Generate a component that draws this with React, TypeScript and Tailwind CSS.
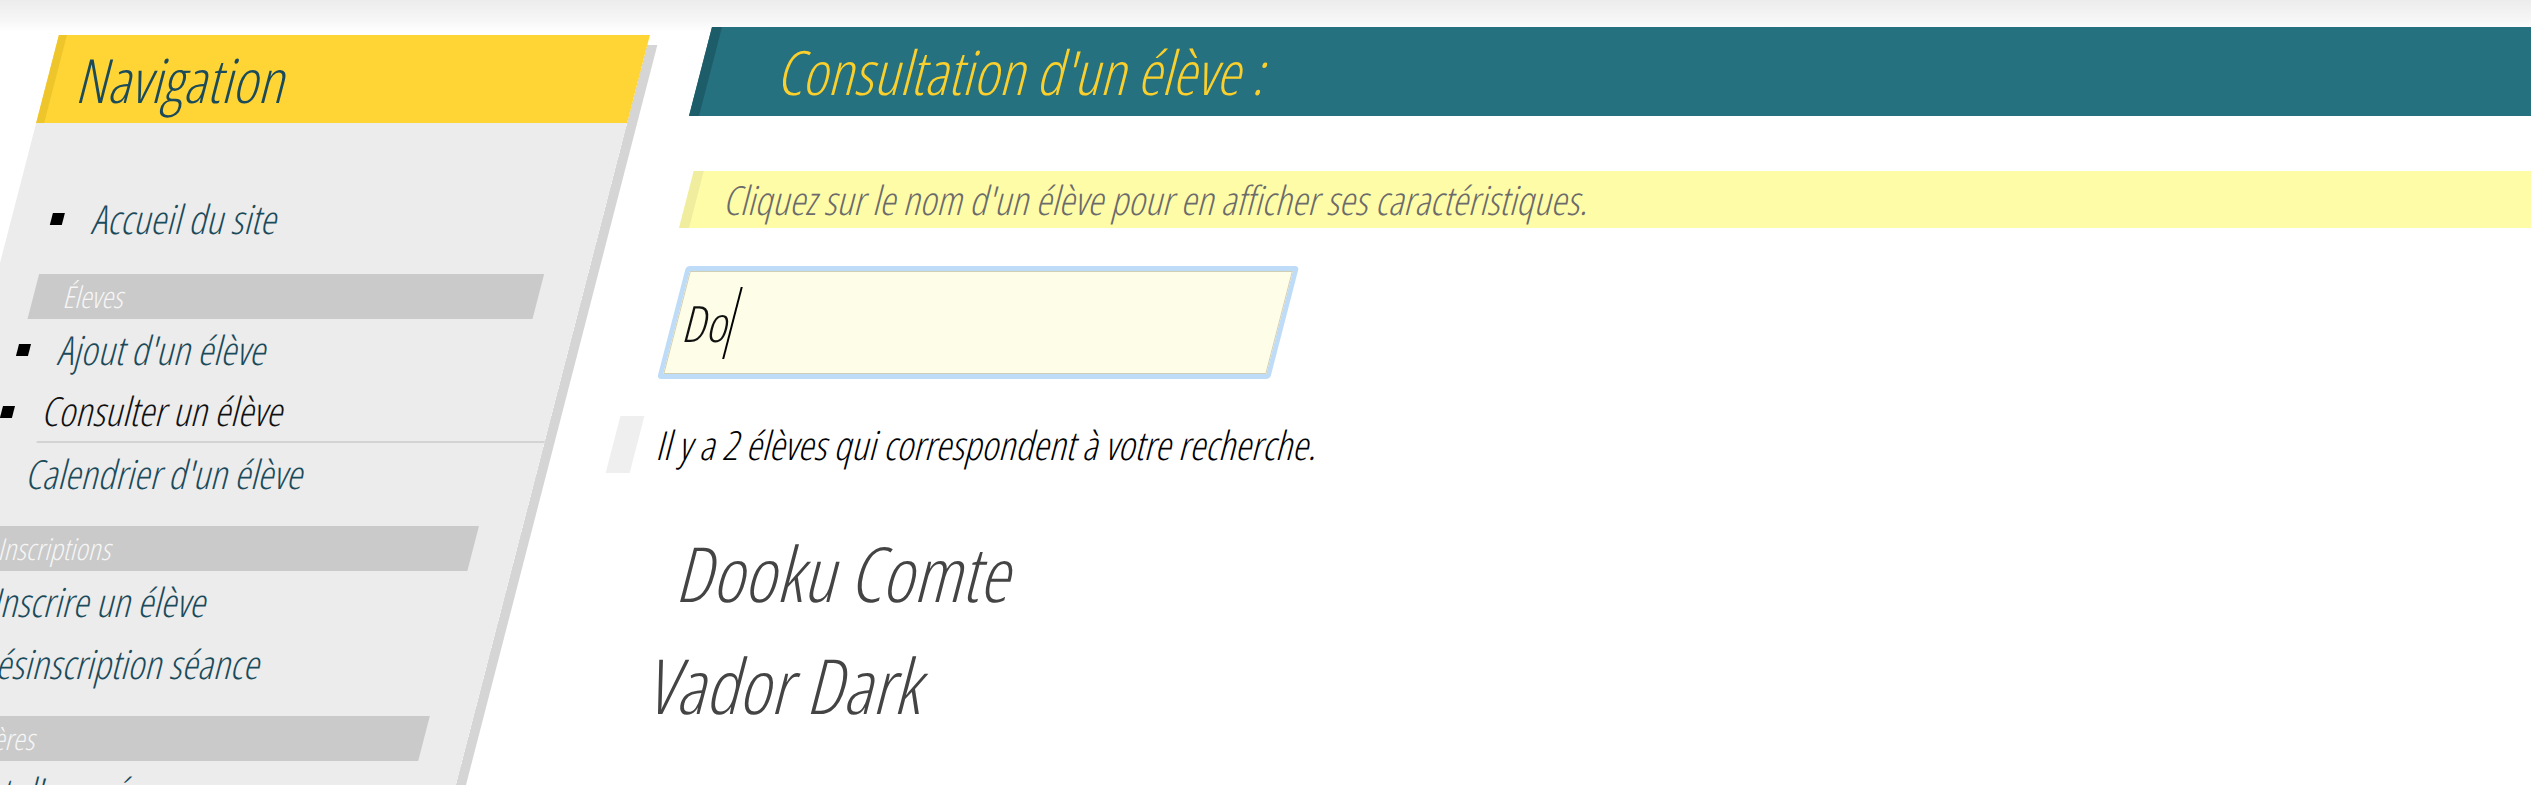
import React from "react"

const navFont = "font-['Open_Sans',sans-serif] font-light [font-stretch:75%]"

function NavItem({ label, active }: { label: string; active?: boolean }) {
  return (
    <li className="flex h-[62px] items-center">
      <span className="ml-[40px] mr-[31px] h-[12px] w-[12px] shrink-0 bg-black" />
      <span
        className={`flex flex-1 self-stretch items-center text-[40px] leading-none ${
          active ? "border-b-2 border-[#d3d3d3] text-[#111111]" : "text-[#1b4b5b]"
        }`}
      >
        {label}
      </span>
    </li>
  )
}

function NavSection({ title, first }: { title: string; first?: boolean }) {
  return (
    <li
      className={`${first ? "mt-[24px]" : "mt-[21px]"} ml-[42px] flex h-[45px] w-[505px] items-center bg-[#cacaca] pl-[32px] text-[30px] leading-none text-[#f6f6f6]`}
    >
      {title}
    </li>
  )
}

export default function App() {
  return (
    <div className="relative h-[785px] w-full overflow-hidden bg-[linear-gradient(to_bottom,#ececec_0px,#f5f5f5_18px,#ffffff_32px)]">
      <div className={`flex w-[2900px] origin-top-left items-start [transform:skewX(-14.5deg)] ${navFont}`}>
        {/* menu */}
        <aside className="ml-[68px] mt-[35px] w-[591px] shrink-0 shadow-[10px_10px_0_#d5d5d5]">
          <div className="flex h-[88px] items-center border-l-[8px] border-[#efc52c] bg-[#ffd535] pl-[25px]">
            <h2 className="text-[61px] leading-none text-[#1b4b5b]">Navigation</h2>
          </div>
          <ul className="h-[700px] bg-[#ececec] pt-[65px]">
            <NavItem label="Accueil du site" />
            <NavSection title="Éleves" first />
            <NavItem label="Ajout d'un élève" />
            <NavItem label="Consulter un élève" active />
            <NavItem label="Calendrier d'un élève" />
            <NavSection title="Inscriptions" />
            <NavItem label="Inscrire un élève" />
            <NavItem label="Désinscription séance" />
            <NavSection title="Matières" />
            <NavItem label="Ajout d'une séance" />
          </ul>
        </aside>

        {/* contenu */}
        <main className="ml-[60px] mt-[27px] flex-1">
          <div className="flex h-[89px] items-center border-l-[10px] border-[#1d5d69] bg-[#26717f] pl-[71px]">
            <h1 className="text-[61px] leading-none text-[#fbd02c]">Consultation d'un élève :</h1>
          </div>

          <div className="ml-[19px] mt-[55px] flex h-[57px] items-center border-l-[10px] border-[#f0ee9e] bg-[#fffca8] pl-[30px]">
            <p className="text-[40px] leading-none text-[#6b6b6b]">
              Cliquez sur le nom d'un élève pour en afficher ses caractéristiques.
            </p>
          </div>

          <div className="ml-[36px] mt-[38px] h-[113px] w-[613px] rounded-[4px] border-[5px] border-[#bedcf8]">
            <div className="flex h-full items-center border border-[#d0ceb4] bg-[#fefde7] pl-[8px]">
              <span className="text-[50px] leading-none text-[#111111]">Do</span>
              <span className="ml-[1px] h-[72px] w-[2px] bg-black" />
            </div>
          </div>

          <div className="ml-[9px] mt-[37px] flex h-[57px] items-center">
            <div className="h-full w-[24px] bg-[#efefef]" />
            <p className="ml-[22px] text-[40px] leading-none text-black">
              Il y a 2 élèves qui correspondent à votre recherche.
            </p>
          </div>

          <ul className="ml-[111px] mt-[44px] text-[76px] leading-[112px] text-[#444444]">
            <li>Dooku Comte</li>
            <li>Vador Dark</li>
          </ul>
        </main>
      </div>
    </div>
  )
}
